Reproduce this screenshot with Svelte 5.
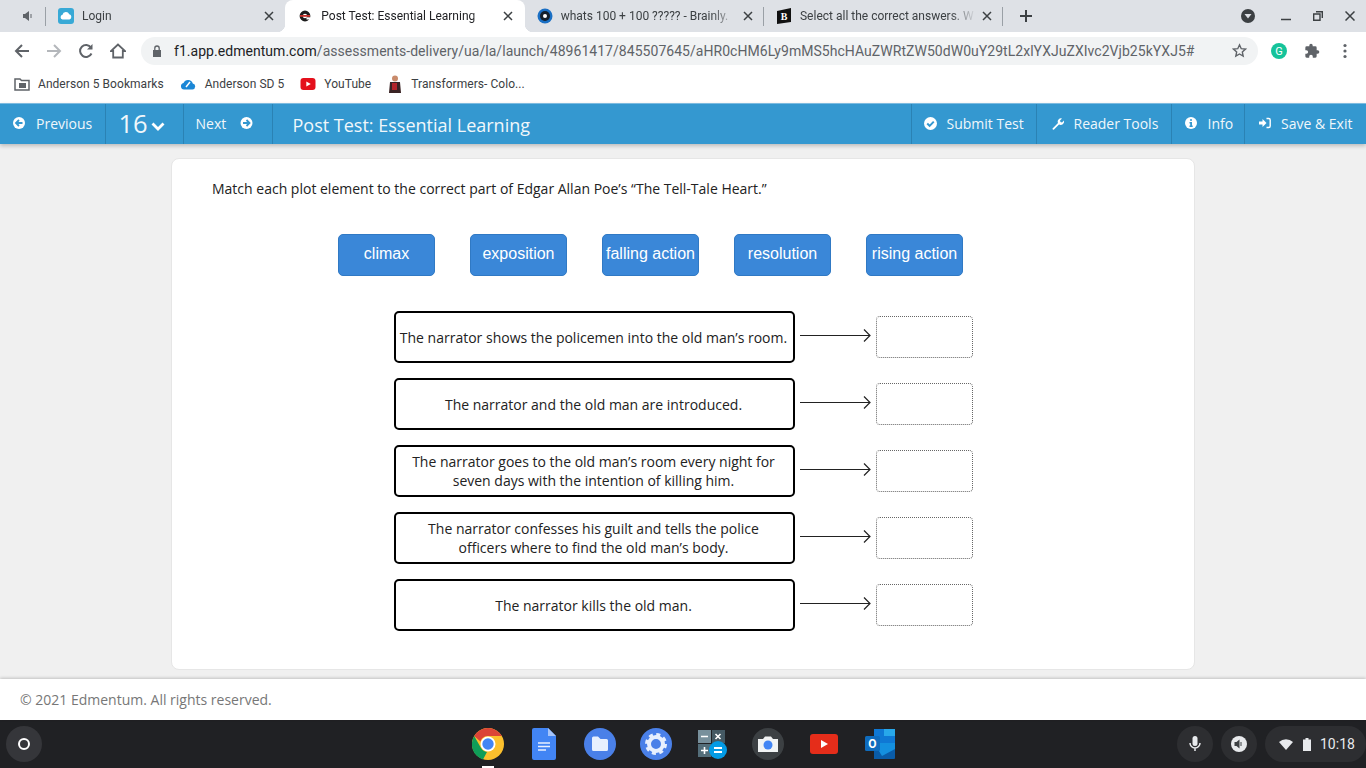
<script lang="ts">
	const tabs = [
		{ title: 'Login', icon: 'cloud', active: false, sep: false },
		{ title: 'Post Test: Essential Learning', icon: 'edm', active: true, sep: false },
		{ title: 'whats 100 + 100 ????? - Brainly.', icon: 'brainly', active: false, sep: true },
		{ title: 'Select all the correct answers. W', icon: 'bartleby', active: false, sep: true }
	];
	const chips = ['climax', 'exposition', 'falling action', 'resolution', 'rising action'];
	const rows = [
		'The narrator shows the policemen into the old man’s room.',
		'The narrator and the old man are introduced.',
		'The narrator goes to the old man’s room every night for\nseven days with the intention of killing him.',
		'The narrator confesses his guilt and tells the police\nofficers where to find the old man’s body.',
		'The narrator kills the old man.'
	];
</script>

<div class="screen">
	<div class="tabstrip">
		<div class="audio">
			<svg width="12" height="12" viewBox="0 0 12 12"><path d="M1 4h2l4-3v10L3 8H1z" fill="#5f6368" /><path d="M9 4v4" stroke="#5f6368" /></svg>
			<span class="sep"></span>
		</div>
		{#each tabs as tab}
			<div class="tab" class:active={tab.active}>
				<span class="favicon">
					{#if tab.icon === 'cloud'}
						<svg width="16" height="16" viewBox="0 0 16 16"><rect width="16" height="16" rx="3" fill="#38a9d6" /><path d="M4.500 11.500a2.400 2.400 0 0 1 0-4.700a3.500 3.500 0 0 1 6.700-.5a2.700 2.700 0 0 1 .3 5.200z" fill="#fff" /></svg>
					{:else if tab.icon === 'edm'}
						<svg width="16" height="16" viewBox="0 0 16 16"><circle cx="8" cy="8" r="3.800" fill="none" stroke="#1c1c1c" stroke-width="3.200" /><path d="M3 7h10v1.800H3z" fill="#c8322c" /><path d="M9.500 9.300h4v2.200h-4z" fill="#fff" /></svg>
					{:else if tab.icon === 'brainly'}
						<svg width="16" height="16" viewBox="0 0 16 16"><circle cx="8" cy="8" r="7.500" fill="#1a6fc4" /><circle cx="8" cy="8" r="5" fill="#14202c" /><circle cx="8" cy="8" r="2" fill="#fff" /></svg>
					{:else}
						<svg width="16" height="16" viewBox="0 0 16 16"><path d="M1 3l14-3v14L1 16z" fill="#111" /><text x="8" y="12" font-size="10" font-weight="700" fill="#fff" text-anchor="middle" font-family="Liberation Serif">B</text></svg>
					{/if}
				</span>
				<span class="title">{tab.title}</span>
				<svg class="close" width="10" height="10" viewBox="0 0 10 10"><path d="M1 1l8 8M9 1L1 9" stroke="#3c4043" stroke-width="1.500" /></svg>
				{#if tab.sep}<span class="sep"></span>{/if}
			</div>
		{/each}
		<svg class="plus" width="14" height="14" viewBox="0 0 14 14"><path d="M7 1v12M1 7h12" stroke="#3c4043" stroke-width="2" /></svg>
		<div class="winctl">
			<svg class="profile" width="16" height="16" viewBox="0 0 16 16"><circle cx="8" cy="8" r="7" fill="#3c4043" /><path d="M4.500 6h7L8 10.500z" fill="#dee1e6" /></svg>
			<svg class="min" width="10" height="10" viewBox="0 0 10 10"><path d="M0 8.500h10" stroke="#3c4043" stroke-width="1.500" /></svg>
			<svg class="max" width="10" height="10" viewBox="0 0 10 10"><path d="M3 .7h6.300V7M.7 3h6.300v6.300H.7z" fill="none" stroke="#3c4043" stroke-width="1.400" /></svg>
			<svg class="x" width="10" height="10" viewBox="0 0 10 10"><path d="M.5.5l9 9M9.500.5l-9 9" stroke="#3c4043" stroke-width="1.500" /></svg>
		</div>
	</div>

	<div class="toolbar">
		<svg class="tool" width="16" height="16" viewBox="0 0 16 16"><path d="M15 8H2M8 2L2 8l6 6" fill="none" stroke="#5f6368" stroke-width="2" /></svg>
		<svg class="tool" width="16" height="16" viewBox="0 0 16 16"><path d="M1 8h13M8 2l6 6-6 6" fill="none" stroke="#b4b7bb" stroke-width="2" /></svg>
		<svg class="tool" width="16" height="16" viewBox="0 0 16 16"><path d="M13.500 10.500A6 6 0 1 1 13 4.500" fill="none" stroke="#5f6368" stroke-width="2" /><path d="M14.500 1v5.500H9z" fill="#5f6368" /></svg>
		<svg class="tool" width="16" height="16" viewBox="0 0 16 16"><path d="M8 1.500L1 8h2.200v6.500h9.600V8H15z" fill="none" stroke="#5f6368" stroke-width="1.800" /></svg>
		<div class="omnibox">
			<svg class="lock" width="10" height="12" viewBox="0 0 10 12"><path d="M1 5h8v7H1z" fill="#5f6368" /><path d="M2.800 5V3.200a2.200 2.200 0 0 1 4.400 0V5" fill="none" stroke="#5f6368" stroke-width="1.300" /></svg>
			<span class="url"><b>f1.app.edmentum.com</b>/assessments-delivery/ua/la/launch/48961417/845507645/aHR0cHM6Ly9mMS5hcHAuZWRtZW50dW0uY29tL2xlYXJuZXIvc2Vjb25kYXJ5#</span>
			<svg class="star" width="15" height="15" viewBox="0 0 24 24"><path d="M12 3l2.800 6.100 6.700.7-5 4.500 1.400 6.600L12 17.500l-5.900 3.400 1.400-6.600-5-4.500 6.700-.7z" fill="none" stroke="#5f6368" stroke-width="2.200" /></svg>
		</div>
		<div class="ext">
			<svg width="16" height="16" viewBox="0 0 16 16"><circle cx="8" cy="8" r="8" fill="#15c39a" /><text x="8" y="12" font-size="11" fill="#fff" text-anchor="middle" font-family="Roboto">G</text></svg>
			<svg class="puzzle" width="16" height="16" viewBox="0 0 24 24"><path d="M20.500 11H19V7a2 2 0 0 0-2-2h-4V3.500a2.500 2.500 0 0 0-5 0V5H4a2 2 0 0 0-2 2v3.800h1.500a2.700 2.700 0 0 1 0 5.400H2V20a2 2 0 0 0 2 2h3.800v-1.500a2.700 2.700 0 0 1 5.400 0V22H17a2 2 0 0 0 2-2v-4h1.500a2.500 2.500 0 0 0 0-5z" fill="#5f6368" /></svg>
			<svg class="dots" width="4" height="16" viewBox="0 0 4 16"><circle cx="2" cy="2.500" r="1.600" fill="#5f6368" /><circle cx="2" cy="8" r="1.600" fill="#5f6368" /><circle cx="2" cy="13.500" r="1.600" fill="#5f6368" /></svg>
		</div>
	</div>

	<div class="bookmarks">
		<span class="bm first">
			<svg width="16" height="14" viewBox="0 0 16 14"><path d="M1 2h5l1.500 1.500H15V13H1z" fill="none" stroke="#5f6368" stroke-width="1.500" /><path d="M5 6h7v5H5z" fill="#5f6368" /></svg>
			Anderson 5 Bookmarks
		</span>
		<span class="bm cloud">
			<svg width="16" height="14" viewBox="0 0 16 14"><path d="M4 12.500a3.300 3.300 0 0 1-.5-6.500a5 5 0 0 1 9.300.4a3.100 3.100 0 0 1-.3 6.100z" fill="#1b87d6" /><path d="M6 10l4-5" stroke="#fff" stroke-width="1.500" /></svg>
			Anderson SD 5
		</span>
		<span class="bm yt">
			<svg width="16" height="12" viewBox="0 0 16 12"><rect width="15" height="12" x=".5" rx="3" fill="#e4101c" /><path d="M6.300 3.500l4.500 2.500-4.500 2.500z" fill="#fff" /></svg>
			YouTube
		</span>
		<span class="bm tf">
			<svg width="16" height="18" viewBox="0 0 16 18"><circle cx="8" cy="3.500" r="3" fill="#c98b6b" /><path d="M3 7h10l1 11H2z" fill="#3a2324" /><path d="M5 8h5v7H5z" fill="#b3242a" /></svg>
			Transformers- Colo...
		</span>
	</div>

	<header class="appbar">
		<a class="nav prev">
			<svg width="12" height="12" viewBox="0 0 12 12"><circle cx="6" cy="6" r="6" fill="#fff" /><path d="M9.500 6h-6M6 3L3 6l3 3" fill="none" stroke="#3498d0" stroke-width="1.800" /></svg>
			Previous
		</a>
		<a class="nav num">
			16
			<svg width="14" height="9" viewBox="0 0 14 9"><path d="M1.500 1.500L7 7l5.500-5.500" fill="none" stroke="#fff" stroke-width="2.800" /></svg>
		</a>
		<a class="nav next">
			Next
			<svg width="13" height="12" viewBox="0 0 12 12"><circle cx="6" cy="6" r="6" fill="#fff" /><path d="M2.500 6h6M6 3l3 3-3 3" fill="none" stroke="#3498d0" stroke-width="1.800" /></svg>
		</a>
		<h1>Post Test: Essential Learning</h1>
		<a class="nav submit">
			<svg width="13" height="13" viewBox="0 0 12 12"><circle cx="6" cy="6" r="6" fill="#fff" /><path d="M3 6l2.200 2.200L9 4.200" fill="none" stroke="#3498d0" stroke-width="1.800" /></svg>
			Submit Test
		</a>
		<a class="nav tools">
			<svg width="13" height="13" viewBox="0 0 13 13"><path d="M1.500 11.500L7 6a3.300 3.300 0 0 1 4-4.500L9 3.500l.5 1.500 1.500.5 2-2A3.500 3.500 0 0 1 8 7.500L3 12.500a1 1 0 0 1-1.500-1z" fill="#fff" /></svg>
			Reader Tools
		</a>
		<a class="nav info">
			<svg width="12" height="12" viewBox="0 0 12 12"><circle cx="6" cy="6" r="6" fill="#fff" /><path d="M5 2.200h2v1.600H5zM4.500 5h2.500v3.500h.7V10H4.500V8.500h.7v-2h-.7z" fill="#3498d0" /></svg>
			Info
		</a>
		<a class="nav exit">
			<svg width="12" height="12" viewBox="0 0 12 12"><path d="M0 4.500h3.500V2l4 4-4 4V7.500H0z" fill="#fff" /><path d="M7.500 1.500h2.200A1.500 1.500 0 0 1 11.200 3v6a1.500 1.500 0 0 1-1.500 1.500H7.500" fill="none" stroke="#fff" stroke-width="1.400" /></svg>
			Save &amp; Exit
		</a>
	</header>

	<main>
		<section class="card">
			<p class="question">Match each plot element to the correct part of Edgar Allan Poe’s “The Tell-Tale Heart.”</p>
			<div class="chips">
				{#each chips as chip}
					<div class="chip">{chip}</div>
				{/each}
			</div>
			<div class="rows">
				{#each rows as row}
					<div class="row">
						<div class="statement">{row}</div>
						<svg class="arrow" width="71" height="42" viewBox="0 0 71 42"><path d="M0 19.500h70M64 13.500l6 6-6 6" fill="none" stroke="#222" stroke-width="1.200" /></svg>
						<div class="target"></div>
					</div>
				{/each}
			</div>
		</section>
	</main>

	<footer>© 2021 Edmentum. All rights reserved.</footer>

	<div class="shelf">
		<span class="launcher"><span class="ring"></span></span>
		<div class="apps">
			<span class="app running">
				<svg width="32" height="32" viewBox="0 0 32 32">
					<circle cx="16" cy="16" r="16" fill="#fbc02d" />
					<path d="M2.200 8A16 16 0 0 1 29.800 8H16a8 8 0 0 0-7.600 5.500z" fill="#db4437" />
					<path d="M2.200 8L9 20a8 8 0 0 0 6 4l-4 7.500A16 16 0 0 1 2.200 8z" fill="#0f9d58" />
					<circle cx="16" cy="16" r="7.500" fill="#fff" /><circle cx="16" cy="16" r="5.700" fill="#4285f4" />
				</svg>
			</span>
			<span class="app">
				<svg width="24" height="32" viewBox="0 0 24 32"><path d="M2 0h14l8 8v22a2 2 0 0 1-2 2H2a2 2 0 0 1-2-2V2a2 2 0 0 1 2-2z" fill="#4285f4" /><path d="M16 0l8 8h-8z" fill="#a6c5fa" /><path d="M6 15h12M6 18.500h12M6 22h8" stroke="#e8f0fe" stroke-width="1.600" /></svg>
			</span>
			<span class="app">
				<svg width="32" height="32" viewBox="0 0 32 32"><circle cx="16" cy="16" r="16" fill="#4a80e8" /><path d="M8 10a1.500 1.500 0 0 1 1.500-1.500H14l2.500 2.500h6A1.500 1.500 0 0 1 24 12.500v9a1.500 1.500 0 0 1-1.500 1.500h-13A1.500 1.500 0 0 1 8 21.500z" fill="#e8f0fe" /></svg>
			</span>
			<span class="app">
				<svg width="32" height="32" viewBox="0 0 32 32"><circle cx="16" cy="16" r="16" fill="#4a80e8" /><circle cx="16" cy="16" r="7" fill="none" stroke="#e8f0fe" stroke-width="4" /><circle cx="16" cy="16" r="9.500" fill="none" stroke="#e8f0fe" stroke-width="3" stroke-dasharray="4 3.460" /></svg>
			</span>
			<span class="app">
				<svg width="32" height="32" viewBox="0 0 32 32"><rect x="2" y="2" width="13" height="13" fill="#78909c" /><rect x="16" y="2" width="13" height="13" fill="#455a64" /><rect x="2" y="16" width="13" height="13" fill="#546e7a" /><path d="M5 8.500h7M19.500 6l5 5M24.500 6l-5 5M5 22.500h7M8.500 19v7" stroke="#fff" stroke-width="1.600" /><circle cx="22" cy="22" r="9" fill="#039be5" /><path d="M18 20h8M18 24h8" stroke="#fff" stroke-width="1.800" /></svg>
			</span>
			<span class="app">
				<svg width="32" height="32" viewBox="0 0 32 32"><circle cx="16" cy="16" r="16" fill="#3c4043" /><path d="M6 11h5l2-2.500h6L21 11h5v13H6z" fill="#f1f3f4" /><circle cx="16" cy="17" r="4.500" fill="#4285f4" /></svg>
			</span>
			<span class="app">
				<svg width="28" height="20" viewBox="0 0 28 20"><rect width="28" height="20" rx="3" fill="#e52d1a" /><path d="M11 6l7 4-7 4z" fill="#fff" /></svg>
			</span>
			<span class="app">
				<svg width="32" height="32" viewBox="0 0 32 32"><path d="M10 1h21v14H10z" fill="#0f78d4" /><path d="M20 1h11v7H20z" fill="#28a8ea" /><path d="M10 15h21v15a1 1 0 0 1-1 1H10z" fill="#0a5ca8" /><path d="M10 15l21 0v6L18 28z" fill="#1490df" /><rect x="1" y="8" width="15" height="15" rx="1.500" fill="#0f6cbd" /><text x="8.500" y="20" font-size="12" font-weight="700" fill="#fff" text-anchor="middle" font-family="Roboto">O</text></svg>
			</span>
		</div>
		<div class="tray">
			<span class="pill">
				<svg width="12" height="16" viewBox="0 0 12 16"><rect x="3.500" y="0" width="5" height="10" rx="2.500" fill="#e8eaed" /><path d="M1 7a5 5 0 0 0 10 0M6 12v3" fill="none" stroke="#e8eaed" stroke-width="1.500" /></svg>
			</span>
			<span class="pill">
				<svg width="16" height="16" viewBox="0 0 16 16"><circle cx="8" cy="8" r="8" fill="#e8eaed" /><path d="M3.500 6h2l3-2.500v9l-3-2.500h-2z" fill="#3c4043" /><path d="M10 6v4" stroke="#3c4043" /></svg>
			</span>
			<span class="status">
				<svg width="14" height="11" viewBox="0 0 14 11"><path d="M0 3a10.500 10.500 0 0 1 14 0L7 11z" fill="#e8eaed" /></svg>
				<svg class="battery" width="8" height="13" viewBox="0 0 8 13"><path d="M2.500 0h3v1.500H8V13H0V1.500h2.500z" fill="#e8eaed" /></svg>
				<span class="clock">10:18</span>
			</span>
		</div>
	</div>
</div>

<style>
	:global(body) {
		margin: 0;
	}

	.screen {
		display: flex;
		flex-direction: column;
		width: 1366px;
		height: 768px;
		overflow: hidden;
		background: #fff;
		font-family: 'Open Sans', sans-serif;
	}

	/* browser chrome */
	.tabstrip {
		display: flex;
		align-items: center;
		height: 32px;
		flex: none;
		background: #dee1e6;
	}

	.audio {
		position: relative;
		display: flex;
		justify-content: flex-end;
		box-sizing: border-box;
		width: 46px;
		height: 32px;
		align-items: center;
		padding-right: 12px;
	}

	.tab {
		position: relative;
		display: flex;
		align-items: center;
		width: 239.330px;
		height: 32px;
		flex: none;
		box-sizing: border-box;
		padding-left: 12px;
		font: 12px Roboto, sans-serif;
		color: #3c4043;
	}

	.tab.active {
		background: #fff;
		border-radius: 8px 8px 0 0;
		color: #202124;
	}

	.tab.active::before,
	.tab.active::after {
		content: '';
		position: absolute;
		bottom: 0;
		width: 8px;
		height: 8px;
	}

	.tab.active::before {
		left: -8px;
		background: radial-gradient(circle at 0 0, transparent 8px, #fff 8.500px);
	}

	.tab.active::after {
		right: -8px;
		background: radial-gradient(circle at 100% 0, transparent 8px, #fff 8.500px);
	}

	.favicon {
		display: flex;
		width: 16px;
		height: 16px;
		margin-right: 8px;
		flex: none;
	}

	.title {
		width: 178px;
		white-space: nowrap;
		overflow: hidden;
		mask-image: linear-gradient(to right, #000 150px, transparent 176px);
	}

	.close {
		margin-left: 4px;
		flex: none;
	}

	.sep {
		position: absolute;
		right: 0;
		top: 7px;
		height: 19px;
		width: 1px;
		background: #9aa0a6;
	}

	.plus {
		margin-left: 16px;
	}

	.winctl {
		display: flex;
		align-items: center;
		margin-left: auto;
		padding-right: 11px;
	}

	.min {
		margin-left: 25px;
	}

	.max {
		margin-left: 22px;
	}

	.x {
		margin-left: 22px;
	}

	.toolbar {
		display: flex;
		align-items: center;
		height: 37px;
		flex: none;
		padding-left: 14px;
		box-sizing: border-box;
	}

	.tool {
		margin-right: 16px;
		flex: none;
	}

	.omnibox {
		display: flex;
		align-items: center;
		width: 1117px;
		height: 28px;
		margin-left: -1px;
		padding: 0 11px;
		box-sizing: border-box;
		flex: none;
		background: #f1f3f4;
		border-radius: 14px;
	}

	.url {
		flex: 1;
		margin-left: 12px;
		overflow: hidden;
		white-space: nowrap;
		letter-spacing: 0.040px;
		font: 14px Roboto, sans-serif;
		color: #5f6368;
	}

	.url b {
		font-weight: 400;
		color: #202124;
	}

	.star {
		flex: none;
	}

	.ext {
		display: flex;
		align-items: center;
		margin-left: 13px;
	}

	.puzzle {
		margin-left: 17px;
	}

	.dots {
		margin-left: 23px;
	}

	.bookmarks {
		display: flex;
		align-items: center;
		height: 34px;
		flex: none;
		padding: 0 0 4px 14px;
		box-sizing: border-box;
		font: 12px Roboto, sans-serif;
		letter-spacing: 0.050px;
		color: #3c4043;
		background: #fff;
	}

	.bm {
		display: inline-flex;
		align-items: center;
		gap: 8px;
		white-space: nowrap;
	}

	.cloud {
		margin-left: 16px;
		gap: 9px;
	}

	.yt {
		margin-left: 16px;
	}

	.tf {
		margin-left: 16px;
	}

	/* edmentum header */
	.appbar {
		position: relative;
		z-index: 2;
		display: flex;
		align-items: stretch;
		height: 41px;
		flex: none;
		box-sizing: border-box;
		border-top: 1px solid #7dbbe0;
		background: #3498d0;
		color: #fff;
		font-size: 14px;
		box-shadow: 0 2px 4px rgb(0 0 0 / 22%);
	}

	.nav {
		display: flex;
		align-items: center;
		box-sizing: border-box;
		padding-bottom: 2px;
		border-right: 1px solid #2a82b4;
		white-space: nowrap;
		color: #f0f7fb;
	}

	.prev {
		width: 105.500px;
		padding-left: 13px;
		gap: 11px;
	}

	.num {
		width: 78px;
		padding-left: 13px;
		gap: 3px;
		font-size: 25.500px;
	}

	.num svg {
		margin-top: 7px;
	}

	.next {
		width: 89px;
		padding-left: 12px;
		gap: 14px;
	}

	.appbar h1 {
		margin: 1px auto 0 20px;
		font-size: 18px;
		font-weight: 400;
		line-height: 41px;
		color: #f0f7fb;
	}

	.submit {
		width: 126px;
		padding-left: 12px;
		gap: 10px;
		border-left: 1px solid #2a82b4;
	}

	.tools {
		width: 135px;
		padding-left: 14px;
		gap: 10px;
	}

	.info {
		width: 73.500px;
		padding-left: 13px;
		gap: 11px;
	}

	.exit {
		width: 121px;
		padding-left: 14px;
		gap: 10px;
		border-right: 0;
	}

	main {
		flex: 1;
		min-height: 0;
		padding: 14px 0 0 171px;
		background: #f0f0f0;
	}

	.card {
		width: 1024px;
		height: 512px;
		box-sizing: border-box;
		padding: 20px 0 0 40px;
		background: #fff;
		border: 1px solid #e6e6e6;
		border-radius: 8px;
	}

	.question {
		margin: 0;
		font-size: 14px;
		line-height: 19px;
		color: #222;
	}

	.chips {
		display: flex;
		gap: 35px;
		margin: 36px 0 0 126px;
	}

	.chip {
		display: flex;
		align-items: center;
		justify-content: center;
		width: 97px;
		height: 42px;
		padding-bottom: 3px;
		box-sizing: border-box;
		border-radius: 5px;
		border: 1px solid #3079c4;
		background: #3a87d8;
		color: #fff;
		white-space: nowrap;
		font: 16px 'Liberation Sans', sans-serif;
	}

	.rows {
		display: flex;
		flex-direction: column;
		gap: 15px;
		margin: 35px 0 0 182px;
	}

	.row {
		display: flex;
		align-items: center;
	}

	.statement {
		display: flex;
		align-items: center;
		justify-content: center;
		width: 401px;
		height: 52px;
		box-sizing: border-box;
		padding: 0 4px 0 2px;
		border: 2px solid #000;
		border-radius: 5px;
		text-align: center;
		white-space: pre-line;
		font-size: 14px;
		line-height: 19px;
		color: #222;
	}

	.arrow {
		margin-left: 5px;
		flex: none;
	}

	.target {
		width: 97px;
		height: 42px;
		margin-left: 5px;
		box-sizing: border-box;
		border: 1px dotted #666;
		border-radius: 4px;
	}

	footer {
		position: relative;
		z-index: 2;
		height: 41px;
		flex: none;
		box-sizing: border-box;
		padding-left: 20px;
		line-height: 41px;
		font-size: 14px;
		color: #777;
		background: #fff;
		box-shadow: 0 -1px 3px rgb(0 0 0 / 20%);
	}

	/* chrome os shelf */
	.shelf {
		display: flex;
		align-items: center;
		height: 48px;
		flex: none;
		background: #202124;
	}

	.launcher {
		display: flex;
		align-items: center;
		justify-content: center;
		width: 36px;
		height: 36px;
		margin-left: 6px;
		border-radius: 50%;
		background: #35363a;
	}

	.ring {
		width: 8px;
		height: 8px;
		border: 2px solid #fff;
		border-radius: 50%;
	}

	.apps {
		display: flex;
		margin-left: 422px;
		gap: 8px;
	}

	.app {
		position: relative;
		display: flex;
		align-items: center;
		justify-content: center;
		width: 48px;
		height: 48px;
	}

	.running::after {
		content: '';
		position: absolute;
		left: 18px;
		bottom: 0;
		width: 12px;
		height: 2px;
		background: #fff;
	}

	.tray {
		display: flex;
		align-items: center;
		gap: 8px;
		margin-left: auto;
	}

	.pill {
		display: flex;
		align-items: center;
		justify-content: center;
		width: 36px;
		height: 36px;
		border-radius: 50%;
		background: #2d2e31;
	}

	.status {
		display: flex;
		align-items: center;
		height: 36px;
		padding-left: 14px;
		width: 101px;
		box-sizing: border-box;
		border-radius: 18px;
		background: #2d2e31;
	}

	.battery {
		margin-left: 10px;
	}

	.clock {
		margin-left: 9px;
		font: 14px Roboto, sans-serif;
		color: #e8eaed;
	}
</style>
